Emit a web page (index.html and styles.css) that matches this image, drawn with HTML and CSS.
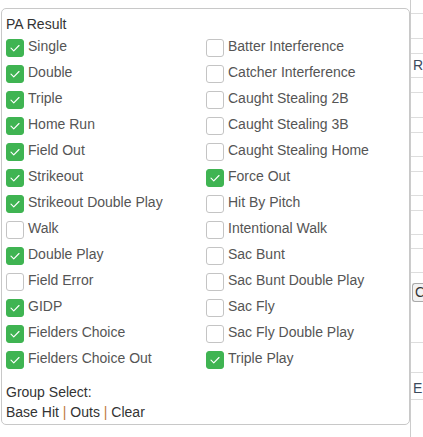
FILE: index.html
```html
<!DOCTYPE html>
<html>
<head>
<meta charset="utf-8">
<link rel="stylesheet" href="styles.css">
</head>
<body>
<div class="page">
  <div class="spacer"></div>
  <div class="bg-table">
    <div class="bg-row h13"></div>
    <div class="bg-row h25"></div>
    <div class="bg-row h15"></div>
    <div class="bg-row h24 cell-text">R</div>
    <div class="bg-row h15"></div>
    <div class="bg-row h25"></div>
    <div class="bg-row h15"></div>
    <div class="bg-row h24"></div>
    <div class="bg-row h15"></div>
    <div class="bg-row h24"></div>
    <div class="bg-row h15"></div>
    <div class="bg-row h24"></div>
    <div class="bg-row h14"></div>
    <div class="bg-row h24"></div>
    <div class="bg-row h70"><span class="bg-btn">C</span></div>
    <div class="bg-row h30"></div>
    <div class="bg-row h27 cell-text e">E</div>
  </div>
</div>

<div class="popover">
  <div class="title">PA Result</div>
  <div class="grid">
    <label class="item"><span class="cb on"><svg viewBox="0 0 18 18"><path d="M4.5 9.2 L7.6 12.2 L13.5 6.2"/></svg></span>Single</label>
    <label class="item"><span class="cb on"><svg viewBox="0 0 18 18"><path d="M4.5 9.2 L7.6 12.2 L13.5 6.2"/></svg></span>Double</label>
    <label class="item"><span class="cb on"><svg viewBox="0 0 18 18"><path d="M4.5 9.2 L7.6 12.2 L13.5 6.2"/></svg></span>Triple</label>
    <label class="item"><span class="cb on"><svg viewBox="0 0 18 18"><path d="M4.5 9.2 L7.6 12.2 L13.5 6.2"/></svg></span>Home Run</label>
    <label class="item"><span class="cb on"><svg viewBox="0 0 18 18"><path d="M4.5 9.2 L7.6 12.2 L13.5 6.2"/></svg></span>Field Out</label>
    <label class="item"><span class="cb on"><svg viewBox="0 0 18 18"><path d="M4.5 9.2 L7.6 12.2 L13.5 6.2"/></svg></span>Strikeout</label>
    <label class="item"><span class="cb on"><svg viewBox="0 0 18 18"><path d="M4.5 9.2 L7.6 12.2 L13.5 6.2"/></svg></span>Strikeout Double Play</label>
    <label class="item"><span class="cb"></span>Walk</label>
    <label class="item"><span class="cb on"><svg viewBox="0 0 18 18"><path d="M4.5 9.2 L7.6 12.2 L13.5 6.2"/></svg></span>Double Play</label>
    <label class="item"><span class="cb"></span>Field Error</label>
    <label class="item"><span class="cb on"><svg viewBox="0 0 18 18"><path d="M4.5 9.2 L7.6 12.2 L13.5 6.2"/></svg></span>GIDP</label>
    <label class="item"><span class="cb on"><svg viewBox="0 0 18 18"><path d="M4.5 9.2 L7.6 12.2 L13.5 6.2"/></svg></span>Fielders Choice</label>
    <label class="item"><span class="cb on"><svg viewBox="0 0 18 18"><path d="M4.5 9.2 L7.6 12.2 L13.5 6.2"/></svg></span>Fielders Choice Out</label>

    <label class="item"><span class="cb"></span>Batter Interference</label>
    <label class="item"><span class="cb"></span>Catcher Interference</label>
    <label class="item"><span class="cb"></span>Caught Stealing 2B</label>
    <label class="item"><span class="cb"></span>Caught Stealing 3B</label>
    <label class="item"><span class="cb"></span>Caught Stealing Home</label>
    <label class="item"><span class="cb on"><svg viewBox="0 0 18 18"><path d="M4.5 9.2 L7.6 12.2 L13.5 6.2"/></svg></span>Force Out</label>
    <label class="item"><span class="cb"></span>Hit By Pitch</label>
    <label class="item"><span class="cb"></span>Intentional Walk</label>
    <label class="item"><span class="cb"></span>Sac Bunt</label>
    <label class="item"><span class="cb"></span>Sac Bunt Double Play</label>
    <label class="item"><span class="cb"></span>Sac Fly</label>
    <label class="item"><span class="cb"></span>Sac Fly Double Play</label>
    <label class="item"><span class="cb on"><svg viewBox="0 0 18 18"><path d="M4.5 9.2 L7.6 12.2 L13.5 6.2"/></svg></span>Triple Play</label>
  </div>
  <div class="group">
    <div>Group Select:</div>
    <div><a class="lnk">Base Hit</a> <span class="sep">|</span> <a class="lnk">Outs</a> <span class="sep">|</span> <a class="lnk">Clear</a></div>
  </div>
</div>
</body>
</html>
```

FILE: styles.css
```css
html, body {
  margin: 0;
  padding: 0;
  background: #fff;
}
body {
  font-family: "Liberation Sans", Arial, sans-serif;
  font-size: 14px;
  line-height: 20px;
  color: #333;
  width: 423px;
  height: 437px;
  overflow: hidden;
  position: relative;
}
.page {
  display: flex;
  height: 437px;
}
.spacer {
  width: 410px;
  flex: none;
}
.bg-table {
  flex: 1;
  border-left: 1px solid #ccc;
  display: flex;
  flex-direction: column;
}
.bg-row {
  border-bottom: 1px solid #ddd;
  box-sizing: border-box;
  flex: none;
}
.h13 { height: 14px; }
.h14 { height: 14px; }
.h15 { height: 15px; }
.h24 { height: 24px; }
.h25 { height: 25px; }
.h27 { height: 27px; }
.h30 { height: 30px; }
.h70 { height: 70px; padding-top: 10px; }
.cell-text {
  padding-left: 2px;
  line-height: 22px;
  color: #3c4a5c;
}
.cell-text.e { line-height: 30px; }
.bg-btn {
  display: block;
  width: 20px;
  height: 17px;
  margin-left: 1px;
  border: 1px solid #aaa;
  border-right: none;
  border-radius: 3px 0 0 3px;
  background: #f2f2f2;
  line-height: 17px;
  padding-left: 2px;
  color: #333;
}

.popover {
  position: absolute;
  left: 1px;
  top: 8px;
  width: 409px;
  box-sizing: border-box;
  border: 1px solid #c8c8c8;
  border-radius: 5px;
  background: #fff;
  padding: 5px 4px 2px 4px;
}
.title {
  color: #333;
  margin-bottom: 2px;
}
.grid {
  display: grid;
  grid-template-columns: 200px 1fr;
  grid-template-rows: repeat(13, 26px);
  grid-auto-flow: column;
}
.item {
  display: flex;
  align-items: flex-start;
  color: #555;
  white-space: nowrap;
}
.cb {
  width: 18px;
  height: 18px;
  box-sizing: border-box;
  border: 1px solid #c4c4c4;
  border-radius: 3px;
  margin-top: 3px;
  margin-right: 4px;
  flex: none;
  background: #fff;
}
.cb.on {
  background: #3fb452;
  border-color: #3fb452;
}
.cb svg {
  display: block;
  width: 16px;
  height: 16px;
  margin: 0;
}
.cb svg path {
  fill: none;
  stroke: #fff;
  stroke-width: 1.3;
  stroke-linecap: round;
  stroke-linejoin: round;
}
.group {
  margin-top: 8px;
  color: #333;
}
.lnk {
  color: #333;
  text-decoration: none;
}
.sep {
  color: #c07a3e;
}
```
